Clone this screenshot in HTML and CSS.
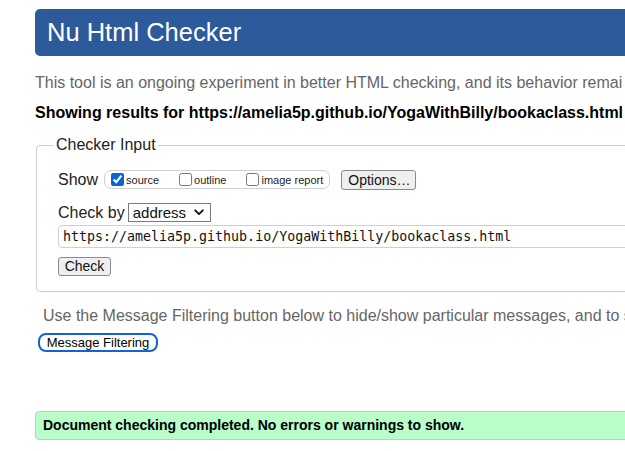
FILE: index.html
```html
<!DOCTYPE html>
<html lang="en">
<head>
<meta charset="utf-8">
<title>Nu Html Checker</title>
<link rel="stylesheet" href="styles.css">
</head>
<body>
<div class="page">
  <header class="header"><h1>Nu Html Checker</h1></header>
  <p class="intro">This tool is an ongoing experiment in better HTML checking, and its behavior remai</p>
  <p class="showing">Showing results for https://amelia5p.github.io/YogaWithBilly/bookaclass.html</p>
  <form class="checker">
    <fieldset class="input-set">
      <legend>Checker Input</legend>
      <div class="row row-show">
        <span class="label">Show</span>
        <fieldset class="show-set">
          <label class="opt"><input type="checkbox" checked><span>source</span></label>
          <label class="opt"><input type="checkbox"><span>outline</span></label>
          <label class="opt"><input type="checkbox"><span>image report</span></label>
        </fieldset>
        <button type="button" class="btn btn-options">Options…</button>
      </div>
      <div class="row row-by">
        <span class="label">Check by</span>
        <span class="select-wrap">
          <select class="select"><option>address</option></select>
          <svg class="chevron" width="10" height="7" viewBox="0 0 10 7"><path d="M1.2 1.3 L5 5.1 L8.8 1.3" fill="none" stroke="#111" stroke-width="1.9" stroke-linecap="round" stroke-linejoin="round"/></svg>
        </span>
      </div>
      <input class="url" type="text" value="https://amelia5p.github.io/YogaWithBilly/bookaclass.html">
      <div class="row row-check"><button type="button" class="btn btn-check">Check</button></div>
    </fieldset>
  </form>
  <p class="filter-note">Use the Message Filtering button below to hide/show particular messages, and to s</p>
  <button type="button" class="btn-filter">Message Filtering</button>
  <div class="success">Document checking completed. No errors or warnings to show.</div>
</div>
</body>
</html>
```
FILE: styles.css
```css
html, body {
  margin: 0;
  padding: 0;
  background: #fff;
  overflow: hidden;
}
body {
  font-family: "Liberation Sans", Arial, sans-serif;
  color: #000;
}
.page {
  width: 1000px;
  padding: 9px 0 0 35px;
}
.header {
  height: 47px;
  background: #2c5a9a;
  border-radius: 5px 0 0 5px;
  padding-left: 12px;
}
.header h1 {
  margin: 0;
  font-size: 25.5px;
  line-height: 47px;
  font-weight: normal;
  color: #fff;
  white-space: nowrap;
}
.intro {
  margin: 18px 0 0;
  font-size: 16px;
  line-height: 17px;
  color: #666;
  white-space: nowrap;
}
.showing {
  margin: 13px 0 0;
  font-size: 16px;
  line-height: 17px;
  font-weight: bold;
  white-space: nowrap;
}
.checker {
  margin: 15px 0 0 1px;
}
.input-set {
  margin: 0;
  border: 1px solid #cfcfcf;
  border-radius: 4px;
  padding: 15px 0 15px 21px;
}
.input-set legend {
  font-size: 16px;
  line-height: 18px;
  padding: 0 2px;
  margin-left: -4px;
  color: #222;
}
.row {
  display: flex;
  align-items: center;
}
.label {
  font-size: 16px;
  line-height: 18px;
  color: #222;
}
.row-show {
  height: 21px;
}
.show-set {
  margin: 0 0 0 6px;
  height: 19px;
  box-sizing: border-box;
  border: 1px solid #d0d0d0;
  border-radius: 7px;
  padding: 0 6px 0 6px;
  display: flex;
  align-items: center;
  gap: 20px;
  min-inline-size: 0;
}
.opt {
  display: flex;
  align-items: center;
  font-size: 11px;
  color: #222;
}
.opt input {
  margin: 0 2px 0 0;
  width: 13px;
  height: 13px;
  accent-color: #0b63d9;
}
.btn {
  font-family: "Liberation Sans", Arial, sans-serif;
  font-size: 14px;
  color: #111;
  background: #efefef;
  border: 1px solid #8a8a8a;
  border-radius: 3px;
  padding: 0 6px;
  height: 20px;
  line-height: 18px;
}
.btn-options {
  margin-left: 11px;
  width: 75px;
}
.row-by {
  margin-top: 13px;
  height: 19px;
}
.select-wrap {
  position: relative;
  margin-left: 3px;
  display: inline-block;
  height: 19px;
}
.select {
  appearance: none;
  -webkit-appearance: none;
  width: 83px;
  height: 19px;
  box-sizing: border-box;
  border: 1px solid #7a7a7a;
  border-radius: 0;
  background: #fff;
  font-family: "Liberation Sans", Arial, sans-serif;
  font-size: 15px;
  line-height: 17px;
  padding: 0 0 0 4px;
  color: #111;
}
.chevron {
  position: absolute;
  right: 7px;
  top: 6px;
}
.url {
  display: block;
  margin-top: 3px;
  width: 800px;
  height: 23px;
  box-sizing: border-box;
  border: 1px solid #d0d0d0;
  border-radius: 4px;
  padding: 0 4px;
  font-family: "DejaVu Sans Mono", "Liberation Mono", monospace;
  font-size: 13.3px;
  color: #111;
  background: #fff;
}
.row-check {
  margin-top: 9px;
}
.btn-check {
  width: 53px;
  height: 19px;
  line-height: 17px;
  padding: 0;
}
.filter-note {
  margin: 15px 0 0;
  padding-left: 8px;
  font-size: 16px;
  line-height: 18px;
  color: #666;
  white-space: nowrap;
}
.btn-filter {
  display: block;
  margin: 8px 0 0 3px;
  height: 19px;
  width: 120px;
  box-sizing: border-box;
  padding: 0;
  border: 2px solid #1462d8;
  border-radius: 8px;
  background: #fff;
  font-family: "Liberation Sans", Arial, sans-serif;
  font-size: 13px;
  line-height: 15px;
  color: #000;
}
.success {
  margin-top: 59px;
  height: 29px;
  box-sizing: border-box;
  border: 1px solid #c8c8c8;
  border-radius: 4px 0 0 4px;
  background: #b9fdc8;
  padding-left: 7px;
  font-size: 14px;
  line-height: 27px;
  font-weight: bold;
  white-space: nowrap;
}
```
